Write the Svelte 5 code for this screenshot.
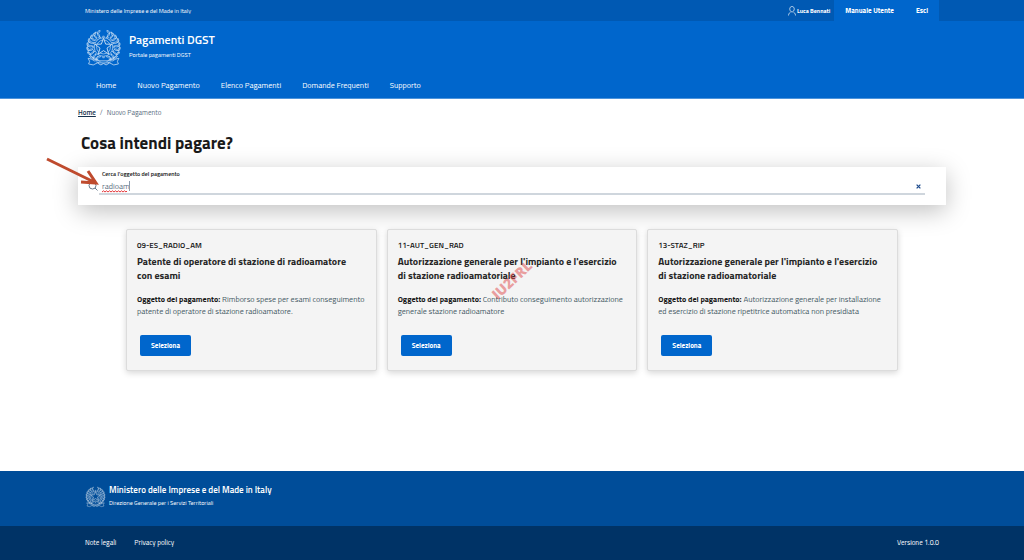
<script lang="ts">
  let search = $state('radioam');

  const menu = ['Home', 'Nuovo Pagamento', 'Elenco Pagamenti', 'Domande Frequenti', 'Supporto'];

  const payments = [
    {
      code: '09-ES_RADIO_AM',
      title: 'Patente di operatore di stazione di radioamatore con esami',
      description: 'Rimborso spese per esami conseguimento patente di operatore di stazione radioamatore.'
    },
    {
      code: '11-AUT_GEN_RAD',
      title: "Autorizzazione generale per l'impianto e l'esercizio di stazione radioamatoriale",
      description: 'Contributo conseguimento autorizzazione generale stazione radioamatore'
    },
    {
      code: '13-STAZ_RIP',
      title: "Autorizzazione generale per l'impianto e l'esercizio di stazione radioamatoriale",
      description: 'Autorizzazione generale per installazione ed esercizio di stazione ripetitrice automatica non presidiata'
    }
  ];

  // teeth of the wheel, one every 22.5 degrees
  const teeth = Array.from({ length: 16 }, (_, i) => i * 22.5);

  // leaves of each branch, from bottom to top
  const leaves = Array.from({ length: 9 }, (_, i) => 28 + i * 16);
</script>

{#snippet emblem()}
  <svg class="emblem" viewBox="0 0 72 72" fill="none" stroke="currentColor" aria-hidden="true">
    <g stroke-width="1.2">
      <circle cx="36" cy="34" r="18" />
      <circle cx="36" cy="34" r="13.5" />
      {#each teeth as angle}
        <path d="M34.5 16V13h3v3" transform="rotate({angle} 36 34)" />
      {/each}
    </g>
    <path
      class="star"
      d="M36 17l4.2 11.4 12.2.4-9.6 7.5 3.4 11.7L36 41.1 25.8 48l3.4-11.7-9.6-7.5 12.2-.4z"
      stroke-width="1.8"
    />
    <g stroke-width="1.3">
      <path d="M30 62C10 58 2 42 6 26 8 17 14 9 23 5M42 62c20-4 28-20 24-36C64 17 58 9 49 5" />
      {#each leaves as angle}
        <path d="M36 63c-3-1-5 0-7 3 4 1 6 0 7-3zM36 63c-2-2-3-5-1-8 2 3 2 5 1 8z" transform="rotate({angle} 36 34)" />
        <path d="M36 63c3-1 5 0 7 3-4 1-6 0-7-3zM36 63c2-2 3-5 1-8-2 3-2 5-1 8z" transform="rotate({-angle} 36 34)" />
      {/each}
    </g>
    <path d="M6 56l8 2 5-3 9 6h16l9-6 5 3 8-2-3 6 2 5-9 2-8-4-7 4-5-3-5 3-7-4-8 4-9-2 2-5z" stroke-width="1.5" />
    <path d="M22 63c6 3 22 3 28 0" stroke-width="1.5" />
  </svg>
{/snippet}

<div class="page">
  <header>
    <div class="slim">
      <div class="container slim-row">
        <a class="ministry" href="/">Ministero delle Imprese e del Made in Italy</a>
        <div class="slim-right">
          <span class="user">
            <svg viewBox="0 0 16 20" fill="none" stroke="currentColor" stroke-width="1.3" aria-hidden="true">
              <path d="M8 1c-3 0-4.500 2.200-4.500 5S5.500 12 8 12s4.500-3.200 4.500-6S11 1 8 1z" />
              <path d="M5.500 11.500C4.500 14 1 13.500 1 19M10.500 11.500c1 2.500 4.500 2 4.500 7.500" />
            </svg>
            Luca Bennati
          </span>
          <a class="slim-link" href="#manuale">Manuale Utente</a>
          <a class="slim-link" href="#esci">Esci</a>
        </div>
      </div>
    </div>

    <div class="container brand">
      {@render emblem()}
      <div>
        <div class="brand-title">Pagamenti DGST</div>
        <div class="brand-subtitle">Portale pagamenti DGST</div>
      </div>
    </div>

    <nav class="container menu">
      {#each menu as item}
        <a href="#{item}">{item}</a>
      {/each}
    </nav>
  </header>

  <main>
    <nav class="breadcrumb" aria-label="Percorso">
      <a href="/">Home</a>
      <span>/</span>
      <span>Nuovo Pagamento</span>
    </nav>

    <h1>Cosa intendi pagare?</h1>

    <div class="search">
      <svg class="lens" viewBox="0 0 20 20" fill="none" stroke="currentColor" stroke-width="1.6" aria-hidden="true">
        <circle cx="9" cy="9" r="7" />
        <path d="M14 14l5 5" />
      </svg>
      <div class="field">
        <label for="search">Cerca l'oggetto del pagamento</label>
        <div class="field-row">
          <input id="search" type="text" spellcheck="false" bind:value={search} />
          {#if search}
            <svg class="squiggle" viewBox="0 0 25 3" fill="none" stroke="#e5383b" aria-hidden="true">
              <path d="M0 2l1.500-1.200L3 2l1.500-1.200L6 2l1.500-1.200L9 2l1.500-1.200L12 2l1.500-1.200L15 2l1.500-1.200L18 2l1.500-1.200L21 2l1.500-1.200L24 2l1-1" />
            </svg>
            <span class="caret"></span>
          {/if}
          <button class="clear" aria-label="Cancella" onclick={() => (search = '')}>
            <svg viewBox="0 0 8 8" stroke="currentColor" stroke-width="2" aria-hidden="true">
              <path d="M1 1l6 6M7 1L1 7" />
            </svg>
          </button>
        </div>
      </div>
      <svg class="arrow" viewBox="0 0 54 32" fill="none" stroke="#bf4b2e" stroke-width="3" aria-hidden="true">
        <path d="M1 2l47 23M42 14l8 12-15-1" />
      </svg>
    </div>

    <div class="cards">
      {#each payments as payment}
        <article class="card">
          <div class="code">{payment.code}</div>
          <h2>{payment.title}</h2>
          <p><strong>Oggetto del pagamento:</strong> {payment.description}</p>
          <button class="select">Seleziona</button>
        </article>
      {/each}
      <span class="watermark">IU2FRL</span>
    </div>
  </main>

  <footer>
    <div class="footer-main">
      <div class="container footer-brand">
        {@render emblem()}
        <div>
          <div class="footer-title">Ministero delle Imprese e del Made in Italy</div>
          <div class="footer-subtitle">Direzione Generale per i Servizi Territoriali</div>
        </div>
      </div>
    </div>
    <div class="footer-bottom">
      <div class="container footer-links">
        <a href="#note">Note legali</a>
        <a href="#privacy">Privacy policy</a>
        <span class="version">Versione 1.0.0</span>
      </div>
    </div>
  </footer>
</div>

<style>
  :global(body) {
    margin: 0;
    background: #fff;
  }

  .page {
    display: flex;
    flex-direction: column;
    min-height: 100vh;
    font-family: 'Titillium Web', Lato, 'Liberation Sans', sans-serif;
    font-size: 8px;
    line-height: 12px;
    color: #1a1a1a;
  }

  .page * {
    box-sizing: border-box;
  }

  a {
    color: inherit;
    text-decoration: none;
  }

  button {
    font: inherit;
    border: 0;
    cursor: pointer;
  }

  .container,
  main {
    width: calc(100% - 156px);
    margin: 0 auto;
  }

  .container {
    padding: 0 7px;
  }

  header {
    background: #0066cc;
    color: #fff;
    border-bottom: 1px solid #4d94db;
  }

  .slim {
    background: #0059b3;
  }

  .slim-row,
  .slim-right {
    display: flex;
    align-items: center;
  }

  .slim-row {
    justify-content: space-between;
  }

  .ministry {
    font-size: 6px;
  }

  .user {
    display: flex;
    align-items: center;
    gap: 1px;
    margin-right: 4px;
    font-size: 6px;
    font-weight: 700;
  }

  .user svg {
    width: 8px;
    height: 10px;
  }

  .slim-link {
    padding: 0 11px;
    background: #0066cc;
    font-size: 7px;
    font-weight: 700;
    line-height: 21px;
  }

  .brand {
    display: flex;
    align-items: center;
    gap: 7px;
    padding-top: 8px;
  }

  .brand > div {
    padding-bottom: 4px;
  }

  .emblem {
    flex: none;
    width: 37px;
    height: 38px;
    opacity: 0.8;
  }

  .star {
    fill: #0066cc;
  }

  .brand-title {
    font-size: 12px;
    font-weight: 600;
    line-height: 18px;
  }

  .brand-subtitle {
    font-size: 6px;
  }

  .menu {
    display: flex;
    gap: 21px;
    padding: 12px 18px 7px;
  }

  main {
    flex: 1;
  }

  .breadcrumb {
    display: flex;
    gap: 4px;
    padding-top: 8px;
    font-size: 7px;
    color: #5c6f82;
  }

  .breadcrumb a {
    color: #17324d;
    font-weight: 600;
    text-decoration: underline;
  }

  h1 {
    margin: 12px 3px;
    font-size: 17px;
    font-weight: 700;
    line-height: 24px;
  }

  .search {
    position: relative;
    display: flex;
    align-items: flex-end;
    gap: 1px;
    padding: 1px 21px 10px 10px;
    background: #fff;
    box-shadow: 0 6px 24px rgba(0, 0, 0, 0.25);
  }

  .lens {
    width: 10px;
    height: 10px;
    margin-bottom: 4px;
    color: #455b71;
  }

  .field {
    flex: 1;
  }

  .field label {
    display: block;
    padding-left: 3px;
    font-size: 6px;
    font-weight: 600;
  }

  .field-row {
    position: relative;
    display: flex;
    align-items: center;
    border-bottom: 2px solid #cfd6dd;
  }

  .field input {
    flex: 1;
    height: 13px;
    padding: 0 3px 2px;
    border: 0;
    outline: 0;
    background: none;
    font: inherit;
    color: #5c6f82;
  }

  .squiggle {
    position: absolute;
    left: 3px;
    bottom: 0;
    width: 25px;
    height: 3px;
  }

  .caret {
    position: absolute;
    left: 30px;
    top: 1px;
    width: 1px;
    height: 10px;
    background: #8a9bad;
  }

  .clear {
    display: flex;
    padding: 4px;
    background: none;
    color: #1c4a8c;
  }

  .clear svg {
    width: 5px;
    height: 5px;
  }

  .arrow {
    position: absolute;
    left: -32px;
    top: -10px;
    width: 54px;
    height: 32px;
  }

  .cards {
    position: relative;
    display: grid;
    grid-template-columns: repeat(3, 1fr);
    gap: 10px;
    padding: 24px 48px;
  }

  .card {
    padding: 9px 8px 14px 10px;
    background: #f4f4f4;
    border: 1px solid #dcdcdc;
    border-radius: 2px;
    box-shadow: 0 2px 6px rgba(0, 0, 0, 0.16);
  }

  .code {
    font-weight: 600;
  }

  h2 {
    margin: 4px 0 10px;
    padding-right: 8px;
    font-size: 10px;
    font-weight: 700;
    line-height: 14px;
    color: #262626;
  }

  p {
    margin: 0 0 18px;
    color: #455a64;
  }

  p strong {
    color: #1a1a1a;
  }

  .select {
    display: block;
    margin-left: 3px;
    padding: 0 11px;
    border-radius: 2px;
    background: #0066cc;
    color: #fff;
    font-size: 7px;
    font-weight: 700;
    line-height: 21px;
  }

  .watermark {
    position: absolute;
    left: 50%;
    top: 69px;
    width: 56px;
    margin-left: -28px;
    color: rgba(222, 72, 72, 0.5);
    font-family: 'Open Sans', 'Liberation Sans', sans-serif;
    font-size: 14px;
    font-weight: 800;
    text-align: center;
    transform: rotate(-43deg);
  }

  .footer-main {
    background: #004d99;
    color: #fff;
  }

  .footer-brand {
    display: flex;
    align-items: center;
    gap: 3px;
    padding-top: 12px;
    padding-bottom: 15px;
  }

  .footer-brand > div {
    padding-bottom: 2px;
  }

  .footer-brand .emblem {
    width: 21px;
    height: 28px;
  }

  .footer-brand .star {
    fill: #004d99;
  }

  .footer-title {
    font-size: 9px;
    font-weight: 600;
    line-height: 14px;
  }

  .footer-subtitle {
    font-size: 6px;
  }

  .footer-bottom {
    background: #003366;
    color: #fff;
  }

  .footer-links {
    display: flex;
    gap: 18px;
    font-size: 7px;
    line-height: 34px;
  }

  .version {
    margin-left: auto;
  }
</style>
